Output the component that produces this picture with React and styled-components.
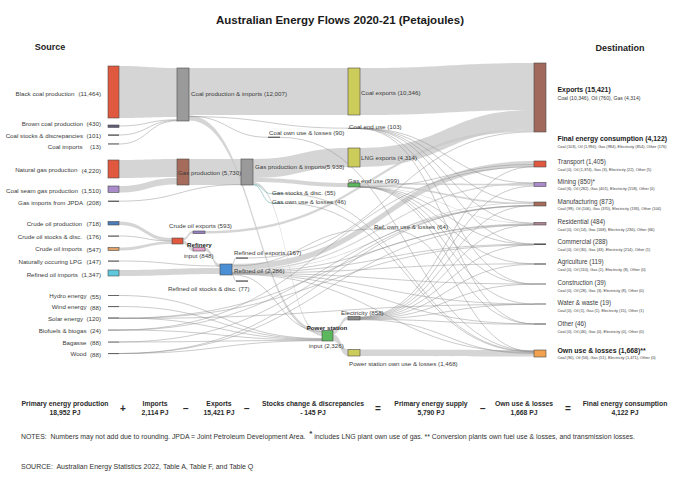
import React from "react";
import styled, { createGlobalStyle } from "styled-components";

const GlobalStyle = createGlobalStyle`
  html, body { margin: 0; padding: 0; background: #fff; }
  body { font-family: "Liberation Sans", Arial, sans-serif; color: #222; }
`;

const bandPath = ([x0, a0, b0, x1, a1, b1]) => {
  const m = (x0 + x1) / 2;
  return `M${x0},${a0}C${m},${a0} ${m},${a1} ${x1},${a1}L${x1},${b1}C${m},${b1} ${m},${b0} ${x0},${b0}Z`;
};

const linePath = ([x0, y0, x1, y1]) => {
  const m = (x0 + x1) / 2;
  return `M${x0},${y0}C${m},${y0} ${m},${y1} ${x1},${y1}`;
};

// nodes: x, y, w, h, fill
const nodes = [
  [108, 66, 11, 52, "#e0593f"],
  [108, 125, 11, 2.4, "#5e5e78"],
  [108, 134.4, 11, 1.4, "#555"],
  [108, 143.4, 11, 1.1, "#555"],
  [108, 160, 11, 18, "#e0593f"],
  [108, 186, 11, 6.5, "#a98bc9"],
  [108, 200.6, 11, 1.3, "#555"],
  [108, 221.5, 11, 3.5, "#4a7db8"],
  [108, 235.5, 11, 1.2, "#555"],
  [108, 247.5, 11, 3, "#e2a06a"],
  [108, 260.5, 11, 1.2, "#555"],
  [108, 270, 11, 6, "#5ec8dc"],
  [108, 295, 11, 1, "#666"],
  [108, 306, 11, 1.1, "#666"],
  [108, 317.4, 11, 1.3, "#666"],
  [108, 329.6, 11, 0.9, "#666"],
  [108, 341.5, 11, 1.1, "#666"],
  [108, 353, 11, 1.1, "#666"],
  [177, 68, 12, 53, "#9a9a9a"],
  [177, 159, 12, 26, "#a56b5b"],
  [241, 159, 12, 26, "#9a9a9a"],
  [172, 238, 11, 6, "#e0593f"],
  [193, 231, 12, 2.6, "#9880c0"],
  [193, 247.5, 12, 3.5, "#e6a2cc"],
  [220, 264, 12, 11, "#4a8fd6"],
  [236, 257.5, 12, 1.1, "#333"],
  [236, 280.5, 12, 1.1, "#333"],
  [268, 136.6, 12, 1.4, "#666"],
  [272, 193.4, 12, 0.8, "#5aa0a0"],
  [272, 202.8, 12, 0.8, "#5aa0a0"],
  [374, 228.6, 12, 0.8, "#666"],
  [348, 127.8, 12, 0.9, "#555"],
  [322, 330.5, 11, 10.5, "#5cb85c"],
  [348, 68, 12, 47, "#cccc5a"],
  [348, 148, 12, 19, "#cccc5a"],
  [348, 183, 12, 4, "#5cb85c"],
  [348, 316.5, 12, 3.5, "#8a8a8a"],
  [348, 349.5, 12, 6.5, "#cccc5a"],
  [534, 63, 12, 69, "#a0695b"],
  [534, 161, 12, 6, "#e0593f"],
  [534, 182.5, 12, 4, "#a98bc9"],
  [534, 202, 12, 4, "#a56b5b"],
  [534, 222.5, 12, 2.5, "#b08494"],
  [534, 243.5, 12, 1.4, "#444"],
  [534, 263.5, 12, 1, "#333"],
  [534, 283.6, 12, 0.8, "#444"],
  [534, 303.6, 12, 0.8, "#444"],
  [534, 323.5, 12, 1, "#444"],
  [534, 350, 12, 7, "#f2a24e"],
];

const bands = [
  [119, 66, 118, 177, 68, 117],
  [189, 68, 115, 348, 68, 115],
  [360, 68, 115, 534, 63, 110],
  [189, 115.5, 120.5, 322, 330.5, 334],
  [119, 160, 178, 177, 159, 177],
  [119, 186, 192.5, 177, 178, 184.5],
  [189, 159, 185, 241, 159, 185],
  [253, 159, 178, 348, 148, 167],
  [253, 178, 182, 348, 183, 187],
  [253, 182, 184, 322, 334, 336],
  [360, 148, 167, 534, 110, 129],
  [119, 221.5, 225, 172, 238, 241.5],
  [119, 247.5, 250.5, 172, 241.5, 244],
  [183, 238, 240.6, 193, 231, 233.6],
  [183, 240.6, 244, 193, 247.5, 251],
  [205, 247.5, 251, 220, 264, 267.5],
  [119, 270, 276, 220, 268, 274],
  [205, 231, 233.6, 534, 129, 131.6],
  [232, 264, 270, 534, 161, 167],
  [232, 270, 271.3, 534, 182.6, 183.9],
  [232, 271.3, 271.9, 534, 202.2, 202.8],
  [333, 330.5, 334.3, 348, 316.5, 320],
  [333, 334.3, 341, 348, 349.5, 356],
  [360, 349.5, 356, 534, 350, 356.5],
  [360, 183, 184.8, 534, 183.9, 185.7],
  [360, 184.8, 186.4, 534, 202.8, 204.4],
  [360, 186.4, 187, 534, 223, 223.8],
];

const teal = [
  [253, 184.4, 272, 193.8],
  [253, 184.7, 272, 203.2],
];

const lines = [
  [119, 126, 177, 119.8],
  [119, 135, 177, 120.3],
  [119, 144, 177, 120.8],
  [119, 201.2, 241, 184.6],
  [119, 236, 172, 241],
  [119, 261, 220, 266],
  [189, 116.2, 268, 137.3],
  [189, 116.6, 348, 128.2],
  [280, 137.3, 534, 351],
  [360, 128.2, 534, 183.2],
  [360, 128.3, 534, 202.4],
  [360, 128.4, 534, 223.2],
  [360, 128.5, 534, 244],
  [360, 128.6, 534, 284],
  [360, 128.7, 534, 324],
  [284, 203.2, 534, 352],
  [284, 193.8, 534, 351.5],
  [360, 186.8, 534, 164.5],
  [360, 186.9, 534, 244.4],
  [360, 186.9, 534, 263.8],
  [360, 187, 534, 284.1],
  [360, 187, 534, 304],
  [360, 187, 534, 323.8],
  [232, 264.5, 236, 258],
  [248, 258, 534, 131.8],
  [232, 274.5, 236, 281],
  [232, 272.2, 534, 224],
  [232, 272.6, 534, 244.2],
  [232, 273, 534, 263.8],
  [232, 273.3, 534, 284],
  [232, 273.6, 534, 304],
  [232, 273.9, 534, 323.9],
  [232, 274.2, 534, 352.5],
  [232, 266, 374, 229],
  [386, 229, 534, 351.8],
  [232, 274.6, 322, 331.5],
  [360, 317, 534, 166.6],
  [360, 317.3, 534, 186],
  [360, 317.6, 534, 205.5],
  [360, 317.9, 534, 224.6],
  [360, 318.2, 534, 244.8],
  [360, 318.5, 534, 264.3],
  [360, 318.8, 534, 284.3],
  [360, 319.1, 534, 304.3],
  [360, 319.4, 534, 324.3],
  [360, 319.7, 534, 353.5],
  [119, 295.5, 322, 338.5],
  [119, 306.5, 322, 339],
  [119, 318, 322, 339.5],
  [119, 330, 322, 340],
  [119, 342, 322, 340.3],
  [119, 353.5, 322, 340.7],
  [119, 318.2, 534, 224.8],
  [119, 318.4, 534, 245],
  [119, 330, 534, 166.8],
  [119, 330.2, 534, 205.7],
  [119, 342, 534, 205.9],
  [119, 353.5, 534, 224.9],
  [119, 353.6, 534, 205.3],
  [119, 318.5, 534, 304.4],
];

const sources = [
  ["Black coal production", "(11,464)", 93, 4],
  ["Brown coal production", "(430)", 123, 3.5],
  ["Coal stocks & discrepancies", "(101)", 135, 3.5],
  ["Coal imports", "(13)", 146, 7.5],
  ["Natural gas production", "(4,220)", 169.5, 4],
  ["Coal seam gas production", "(1,510)", 190, 3.5],
  ["Gas imports from JPDA", "(208)", 202, 3.5],
  ["Crude oil production", "(718)", 223, 4.5],
  ["Crude oil stocks & disc.", "(176)", 236, 4.5],
  ["Crude oil imports", "(547)", 248.7, 4.5],
  ["Naturally occuring LPG", "(147)", 261, 4.5],
  ["Refined oil imports", "(1,347)", 274, 3.5],
  ["Hydro energy", "(55)", 295.5, 3.5],
  ["Wind energy", "(88)", 306.5, 3.5],
  ["Solar energy", "(120)", 318, 3.5],
  ["Biofuels & biogas", "(24)", 330, 3.5],
  ["Bagasse", "(88)", 342, 3.5],
  ["Wood", "(88)", 353.5, 3.5],
];

const middle = [
  ["Coal production & imports (12,007)", 191, 93],
  ["Coal own use & losses (90)", 269, 132.5],
  ["Coal exports (10,346)", 361, 92],
  ["Coal end use (103)", 349, 126.5],
  ["LNG exports (4,314)", 361, 157],
  ["Gas end use (999)", 348, 180],
  ["Gas production (5,730)", 178, 172.5],
  ["Gas production & imports(5,938)", 255, 166.5],
  ["Gas stocks & disc. (55)", 272, 192],
  ["Gas own use & losses (46)", 272, 201.5],
  ["Crude oil exports (593)", 169, 225],
  ["input (848)", 184, 255.5],
  ["Refined oil exports (167)", 234, 252.5],
  ["Refined oil (2,286)", 234, 270],
  ["Refined oil stocks & disc. (77)", 168, 288],
  ["Ref. own use & losses (64)", 374, 226.5],
  ["Electricity (858)", 341, 312],
  ["input (2,326)", 309, 345],
  ["Power station own use & losses (1,468)", 349, 363],
];

const destinations = [
  ["Exports (15,421)", "Coal (10,346), Oil (760), Gas (4,314)", 89, 98, true, true],
  ["Final energy consumption (4,122)", "Coal (103), Oil (1,994), Gas (984), Electricity (854), Other (176)", 138.5, 146, true],
  ["Transport (1,405)", "Coal (0), Oil (1,374), Gas (3), Electricity (22), Other (5)", 161, 169],
  ["Mining (850)*", "Coal (6), Oil (282), Gas (401), Electricity (158), Other (0)", 181, 188.7],
  ["Manufacturing (873)", "Coal (99), Oil (106), Gas (370), Electricity (193), Other (104)", 201, 208.8],
  ["Residential (484)", "Coal (0), Oil (14), Gas (168), Electricity (236), Other (66)", 221, 229],
  ["Commercial (288)", "Coal (0), Oil (30), Gas (43), Electricity (214), Other (1)", 241.4, 249.6],
  ["Agriculture (119)", "Coal (0), Oil (110), Gas (1), Electricity (8), Other (0)", 261.7, 269.6],
  ["Construction (39)", "Coal (0), Oil (28), Gas (3), Electricity (8), Other (0)", 282, 290],
  ["Water & waste (19)", "Coal (0), Oil (1), Gas (1), Electricity (15), Other (1)", 302, 310],
  ["Other (46)", "Coal (0), Oil (46), Gas (0), Electricity (0), Other (0)", 323, 331.2],
  ["Own use & losses (1,668)**", "Coal (90), Oil (56), Gas (51), Electricity (1,471), Other (0)", 350.3, 357.8, true],
];

const terms = [
  ["Primary energy production", "18,952 PJ"],
  "+",
  ["Imports", "2,114 PJ"],
  "−",
  ["Exports", "15,421 PJ"],
  "−",
  ["Stocks change & discrepancies", "- 145 PJ"],
  "=",
  ["Primary energy supply", "5,790 PJ"],
  "−",
  ["Own use & losses", "1,668 PJ"],
  "=",
  ["Final energy consumption", "4,122 PJ"],
];

export default function App() {
  return (
    <Page>
      <GlobalStyle />
      <Title>Australian Energy Flows 2020-21 (Petajoules)</Title>
      <FlowChart viewBox="0 38 680 337" width="680" height="337">
        <Heading x="50" y="47">Source</Heading>
        <Heading x="620" y="48">Destination</Heading>
        {bands.map((b, i) => (
          <Band key={"b" + i} d={bandPath(b)} />
        ))}
        {lines.map((l, i) => (
          <Link key={"l" + i} d={linePath(l)} />
        ))}
        {teal.map((l, i) => (
          <Link key={"t" + i} d={linePath(l)} $color="#4f9e9e" />
        ))}
        {nodes.map(([x, y, w, h, fill], i) => (
          <Node key={"n" + i} x={x} y={y} width={w} height={h} fill={fill} $thin={h < 2} />
        ))}
        {sources.map(([name, num, y, gap]) => (
          <Label key={name} x="101" y={y} textAnchor="end">
            {name}
            <tspan dx={gap}>{num}</tspan>
          </Label>
        ))}
        {middle.map(([text, x, y]) => (
          <Label key={text} x={x} y={y}>
            {text}
          </Label>
        ))}
        <Label x="187" y="244.5" $bold>
          Refinery
        </Label>
        <Label x="327" y="327" textAnchor="middle" $bold>
          Power station
        </Label>
        {destinations.map(([name, sub, y, sy, bold, big]) => (
          <g key={name}>
            <Label x="557.5" y={y} $bold={bold} $size={bold ? 6.9 : 6.3}>
              {name}
            </Label>
            <Label x="557.5" y={sy} $size={big ? 5.1 : 3.9}>
              {sub}
            </Label>
          </g>
        ))}
      </FlowChart>
      <Equation>
        {terms.map((t, i) =>
          typeof t === "string" ? (
            <Op key={i}>{t}</Op>
          ) : (
            <Term key={i}>
              {t[0]}
              <br />
              {t[1]}
            </Term>
          )
        )}
      </Equation>
      <Note>
        NOTES:&nbsp; Numbers may not add due to rounding. JPDA = Joint Petroleum Development Area.&nbsp;{" "}
        <Star>*</Star> includes LNG plant own use of gas. ** Conversion plants own fuel use &amp; losses, and
        transmission losses.
      </Note>
      <Source>SOURCE:&nbsp; Australian Energy Statistics 2022, Table A, Table F, and Table Q</Source>
    </Page>
  );
}

const Page = styled.div`
  width: 680px;
  height: 481px;
  display: flex;
  flex-direction: column;
  overflow: hidden;
`;

const Title = styled.h1`
  margin: 0;
  height: 38px;
  padding-top: 13.5px;
  box-sizing: border-box;
  text-align: center;
  font-size: 11.5px;
  line-height: 13px;
  font-weight: bold;
  color: #1a1a1a;
`;

const FlowChart = styled.svg`
  display: block;
  flex: none;
  font-family: "Liberation Sans", Arial, sans-serif;
`;

const Heading = styled.text`
  font-size: 9px;
  font-weight: bold;
  fill: #222;
  text-anchor: middle;
  dominant-baseline: central;
`;

const Label = styled.text`
  font-size: ${(p) => p.$size || 6.2}px;
  font-weight: ${(p) => (p.$bold ? "bold" : "normal")};
  fill: ${(p) => (p.$bold ? "#1a1a1a" : "#3a3a3a")};
  dominant-baseline: central;
`;

const Band = styled.path`
  fill: #c9c9c9;
  opacity: 0.78;
`;

const Link = styled.path`
  fill: none;
  stroke: ${(p) => p.$color || "#8e8e8e"};
  stroke-width: 0.55;
  opacity: 0.85;
`;

const Node = styled.rect`
  stroke: ${(p) => (p.$thin ? "none" : "#4a4a4a")};
  stroke-width: 0.6;
`;

const Equation = styled.div`
  display: grid;
  grid-template-columns: 90px 26px 38px 24px 42px 14px 118px 12px 94px 10px 72px 16px 98px;
  margin-top: 23.5px;
  padding-left: 20px;
`;

const Term = styled.div`
  text-align: center;
  font-size: 6.8px;
  line-height: 9px;
  font-weight: bold;
  color: #2a2a2a;
  white-space: nowrap;
`;

const Op = styled.div`
  align-self: center;
  text-align: center;
  font-size: 10px;
  font-weight: bold;
  color: #2a2a2a;
  padding-top: 2px;
`;

const Note = styled.p`
  margin: 16px 0 0;
  padding-left: 21px;
  font-size: 6.9px;
  line-height: 8px;
  color: #333;
  white-space: nowrap;
`;

const Star = styled.sup`
  font-size: 8px;
  font-weight: bold;
  line-height: 0;
`;

const Source = styled(Note)`
  margin-top: 22px;
  font-size: 7px;
`;
